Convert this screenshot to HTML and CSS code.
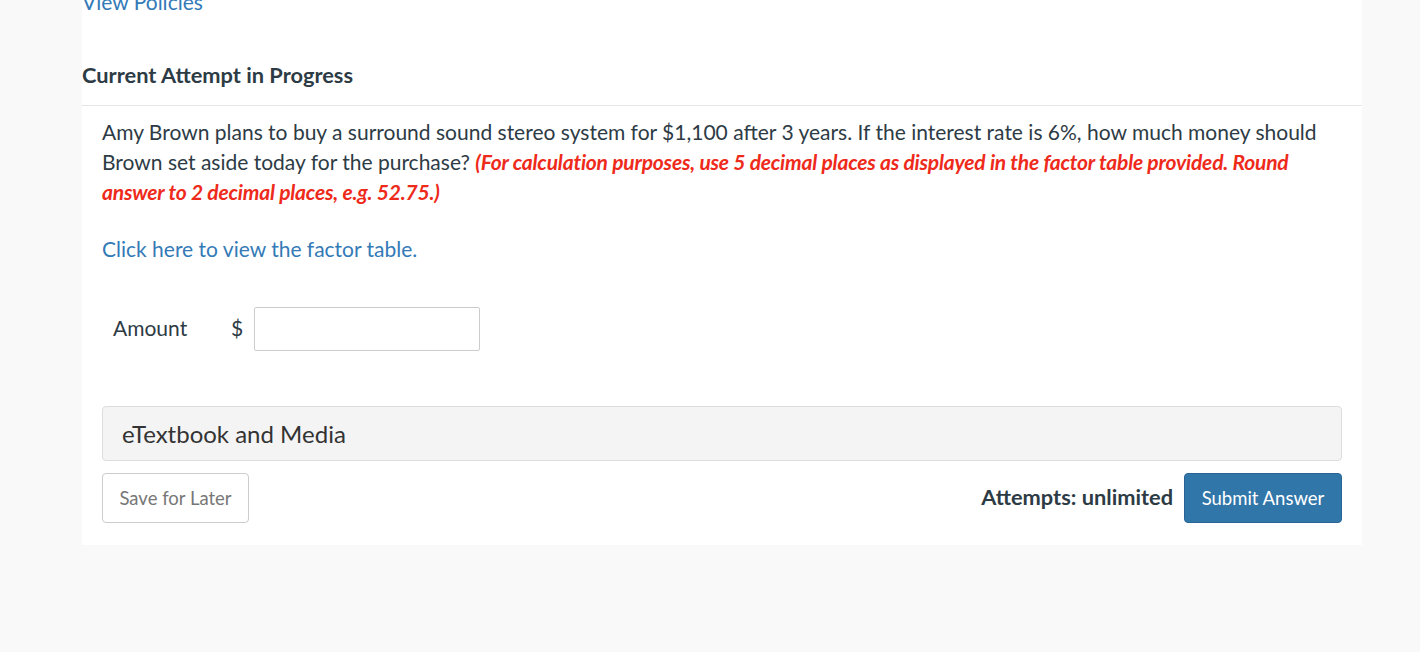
FILE: index.html
```html
<!DOCTYPE html>
<html>
<head>
<meta charset="utf-8">
<link rel="stylesheet" href="styles.css">
</head>
<body>
<div class="card">
  <a class="policies" href="#">View Policies</a>
  <h2 class="attempt-title">Current Attempt in Progress</h2>
  <div class="question">
    <p class="q-text">Amy Brown plans to buy a surround sound stereo system for $1,100 after 3 years. If the interest rate is 6%, how much money should Brown set aside today for the purchase? <em class="note">(For calculation purposes, use 5 decimal places as displayed in the factor table provided. Round answer to 2 decimal places, e.g. 52.75.)</em></p>
    <p class="factor"><a href="#">Click here to view the factor table.</a></p>
    <div class="answer-row">
      <span class="label">Amount</span>
      <span class="dollar">$</span>
      <input class="amount-input" type="text">
    </div>
    <div class="media-panel">eTextbook and Media</div>
    <div class="actions">
      <button class="btn-save">Save for Later</button>
      <div class="right">
        <span class="attempts">Attempts: unlimited</span>
        <button class="btn-submit">Submit Answer</button>
      </div>
    </div>
  </div>
</div>
</body>
</html>
```
FILE: styles.css
```css
html, body {
  margin: 0;
  padding: 0;
  background: #f9f9f9;
  font-family: Lato, "Open Sans", sans-serif;
  color: #2d3b45;
}
.card {
  width: 1280px;
  margin-left: 82px;
  margin-top: -12px;
  background: #fff;
  padding-bottom: 22px;
}
.policies {
  display: block;
  color: #337ab7;
  text-decoration: none;
  font-size: 21px;
  line-height: 28px;
}
.attempt-title {
  margin: 0;
  padding: 44px 0 0;
  font-size: 21.8px;
  font-weight: 700;
  line-height: 30px;
  height: 45px;
  border-bottom: 1px solid #e6e6e6;
}
.question {
  padding: 11px 20px 0;
}
.q-text {
  margin: 0;
  font-size: 21px;
  line-height: 30px;
}
.note {
  color: #ee2a1b;
  font-weight: 700;
  font-size: 21px;
  letter-spacing: -0.2px;
}
.factor {
  margin: 27px 0 0;
  font-size: 21px;
  line-height: 30px;
}
.factor a {
  color: #337ab7;
  text-decoration: none;
}
.answer-row {
  display: flex;
  align-items: center;
  margin-top: 43px;
  padding-left: 11px;
  height: 44px;
}
.label {
  font-size: 21px;
  width: 118px;
  margin-top: -3px;
}
.dollar {
  font-size: 21px;
  width: 23px;
  margin-top: -3px;
}
.amount-input {
  box-sizing: border-box;
  width: 226px;
  height: 44px;
  border: 1px solid #ccc;
  border-radius: 2px;
  margin: 0;
}
.media-panel {
  margin-top: 55px;
  box-sizing: border-box;
  height: 55px;
  background: #f4f4f4;
  border: 1px solid #ddd;
  border-radius: 4px;
  padding: 0 19px;
  font-size: 24px;
  line-height: 53px;
  color: #333;
}
.actions {
  display: flex;
  justify-content: space-between;
  align-items: center;
  margin-top: 12px;
}
.btn-save {
  box-sizing: border-box;
  height: 50px;
  width: 147px;
  background: #fff;
  border: 1px solid #ccc;
  border-radius: 4px;
  color: #777;
  font-family: Lato, sans-serif;
  font-size: 18.5px;
  padding: 0;
}
.right {
  display: flex;
  align-items: center;
  gap: 11px;
}
.attempts {
  font-size: 21.8px;
  font-weight: 700;
  margin-top: -4px;
}
.btn-submit {
  box-sizing: border-box;
  height: 50px;
  width: 158px;
  background: #3176a9;
  border: 1px solid #2a6496;
  border-radius: 4px;
  color: #fff;
  font-family: Lato, sans-serif;
  font-size: 18.5px;
  padding: 0;
}
```
